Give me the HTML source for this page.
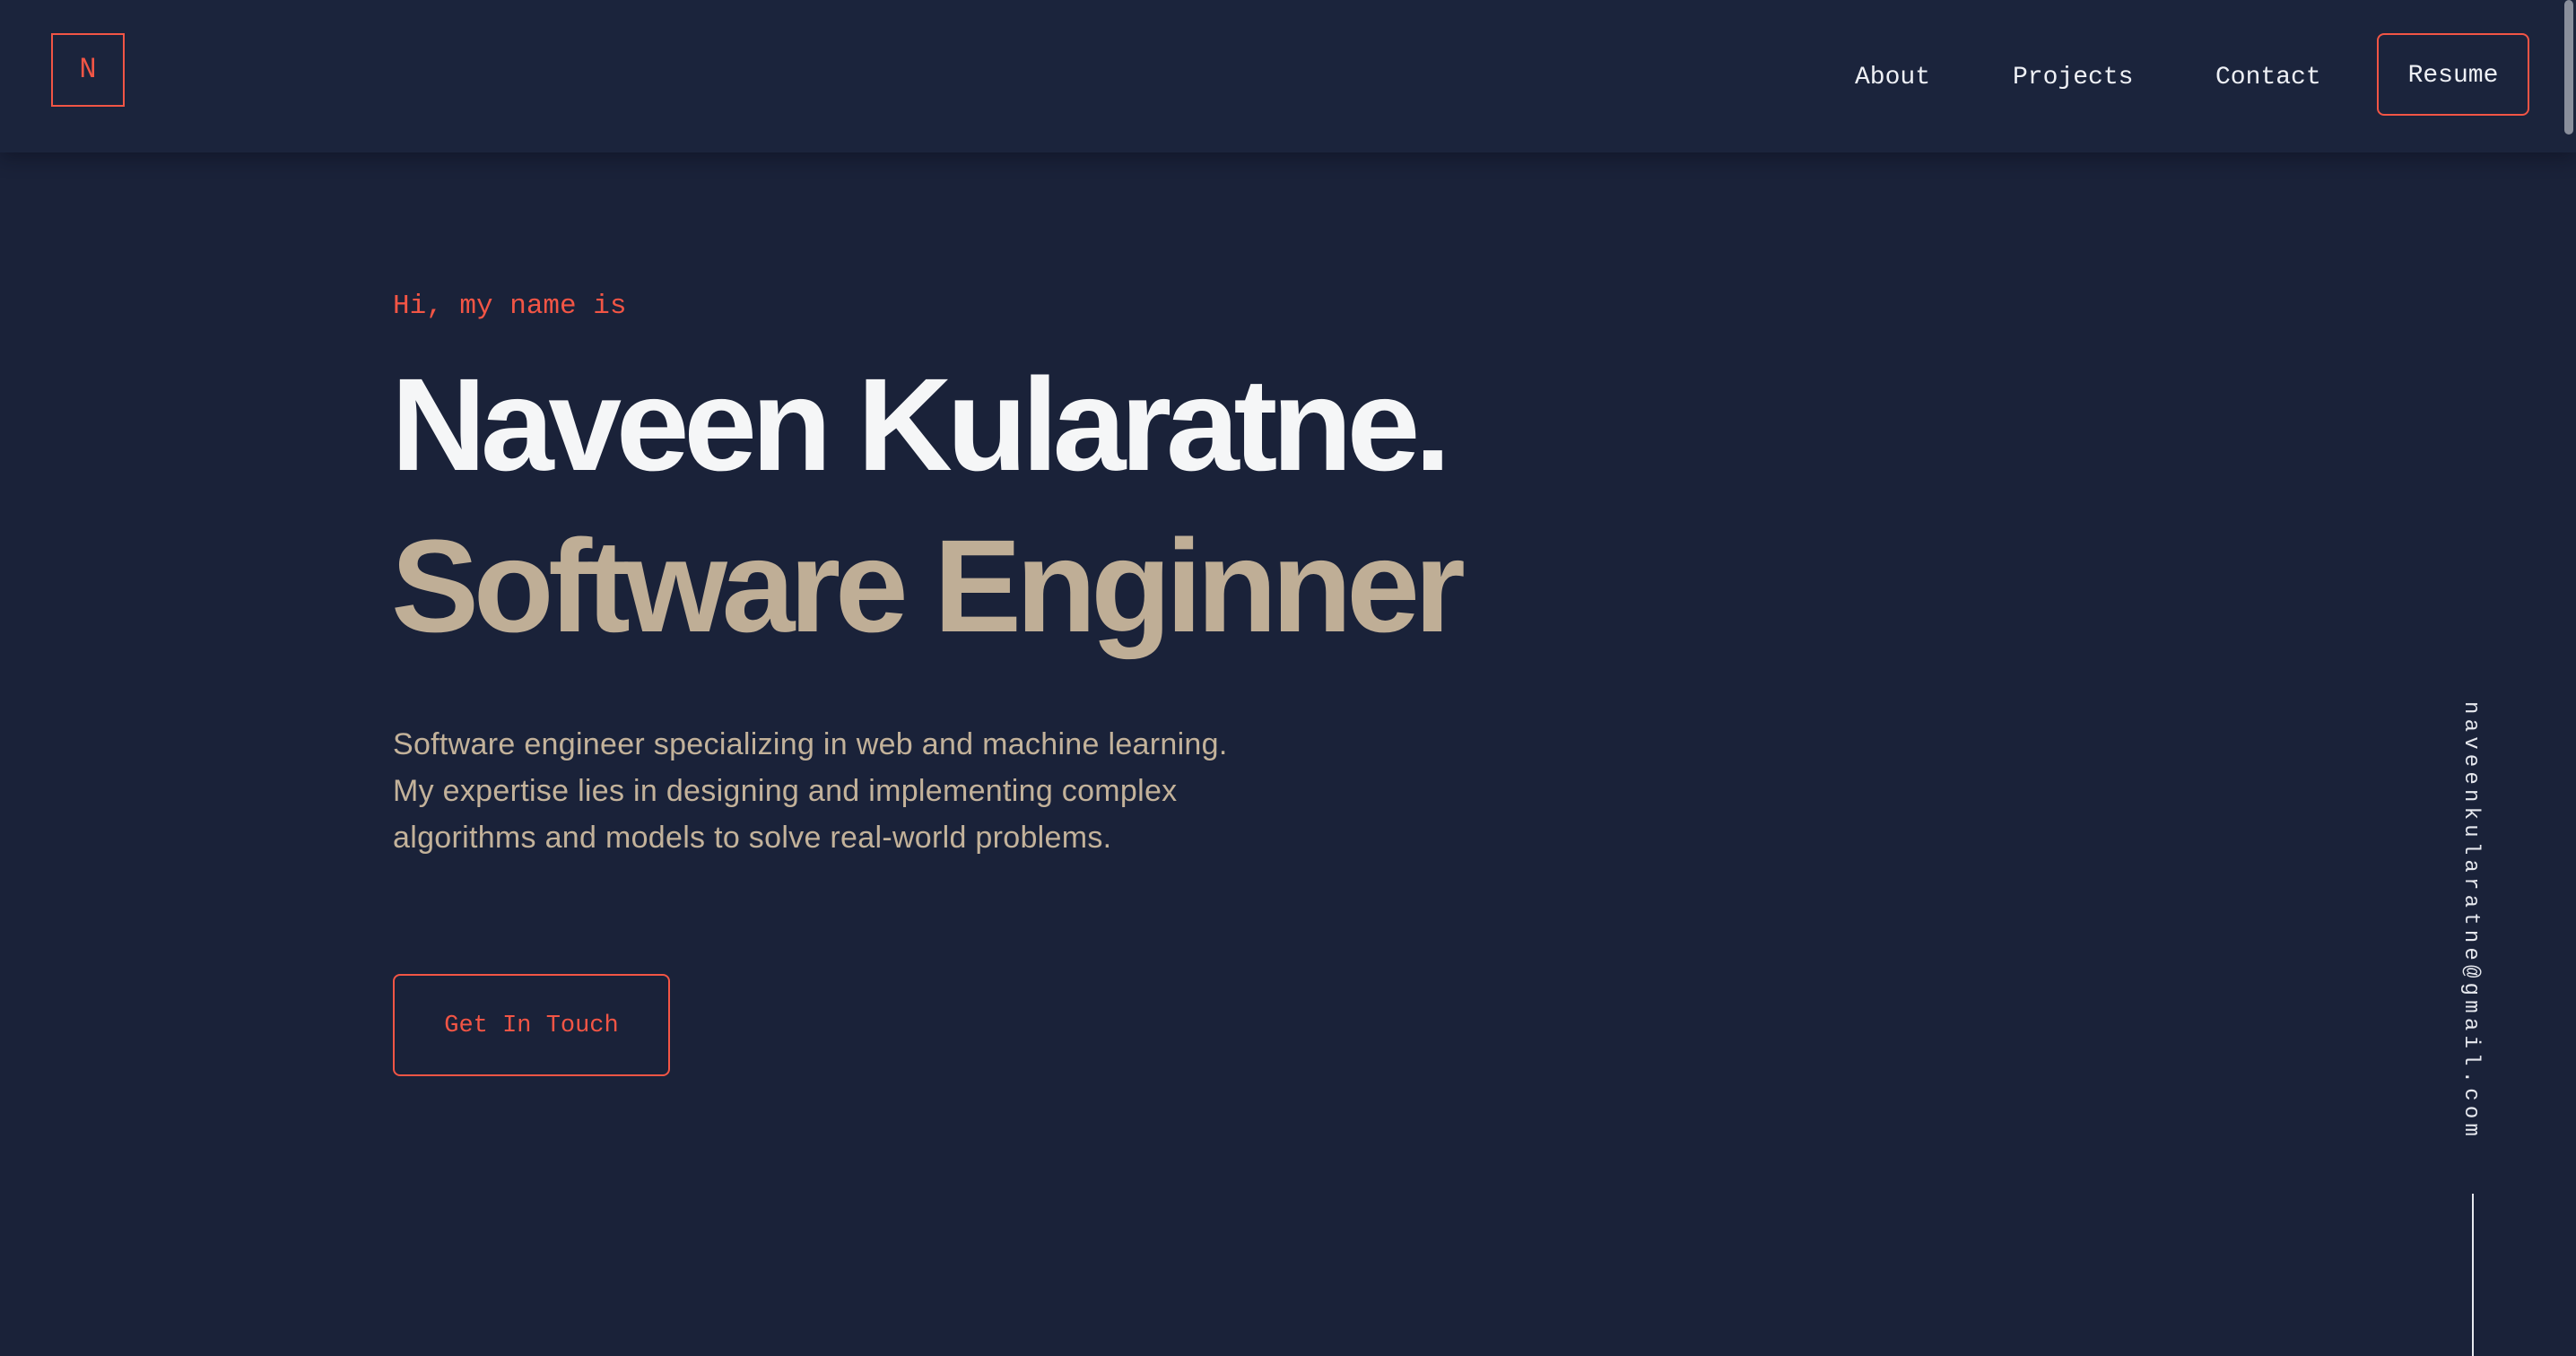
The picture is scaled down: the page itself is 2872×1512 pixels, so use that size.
<!DOCTYPE html>
<html><head><meta charset="utf-8"><style>
html,body{margin:0;padding:0;width:2872px;height:1512px;overflow:hidden;background:#1a2239;}
body{position:relative;font-family:"Liberation Sans",sans-serif;}
.hdr{position:absolute;left:0;top:0;width:2872px;height:170px;background:#1b243c;box-shadow:0 6px 20px rgba(8,12,25,.45);}
.logo{position:absolute;left:57px;top:37px;width:82px;height:82px;border:2px solid #f25545;box-sizing:border-box;color:#f25545;font:32px "Liberation Mono",monospace;text-align:center;line-height:78px;}
.nav{position:absolute;top:71px;font:28px "Liberation Mono",monospace;color:#eef0f5;}
.resume{position:absolute;left:2650px;top:37px;width:170px;height:92px;border:2px solid #f25545;border-radius:8px;box-sizing:border-box;color:#eef0f5;font:28px "Liberation Mono",monospace;text-align:center;line-height:92px;}
.sb{position:absolute;left:2859px;top:0;width:10px;height:150px;background:#8a8f9c;border-radius:5px;}
.hi{position:absolute;left:438px;top:324px;font:31px "Liberation Mono",monospace;color:#f25545;}
.name{position:absolute;left:436px;top:394px;font-weight:bold;font-size:147px;letter-spacing:-6.3px;color:#f5f6f7;line-height:160px;white-space:nowrap;}
.role{position:absolute;left:436px;top:574px;font-weight:bold;font-size:147px;letter-spacing:-6.3px;color:#bfae96;line-height:160px;white-space:nowrap;}
.p{position:absolute;left:438px;top:804px;font-size:34px;line-height:52px;color:#c3b29a;letter-spacing:0.3px;}
.btn{position:absolute;left:438px;top:1086px;width:309px;height:114px;border:2px solid #f25545;border-radius:8px;box-sizing:border-box;color:#f25545;font:27px "Liberation Mono",monospace;text-align:center;line-height:112px;}
.mail{position:absolute;left:2741px;top:782px;writing-mode:vertical-rl;font:24px "Liberation Mono",monospace;letter-spacing:5.2px;color:#e6e8ee;}
.line{position:absolute;left:2756px;top:1331px;width:2px;height:181px;background:#e6e8ee;}
</style></head><body>
<div class="hdr">
<div class="logo">N</div>
<div class="nav" style="left:2068px">About</div>
<div class="nav" style="left:2244px">Projects</div>
<div class="nav" style="left:2470px">Contact</div>
<div class="resume">Resume</div>
</div>
<div class="sb"></div>
<div class="hi">Hi, my name is</div>
<div class="name">Naveen Kularatne.</div>
<div class="role">Software Enginner</div>
<div class="p">Software engineer specializing in web and machine learning.<br>My expertise lies in designing and implementing complex<br>algorithms and models to solve real-world problems.</div>
<div class="btn">Get In Touch</div>
<div class="mail">naveenkularatne@gmail.com</div>
<div class="line"></div>
</body></html>
